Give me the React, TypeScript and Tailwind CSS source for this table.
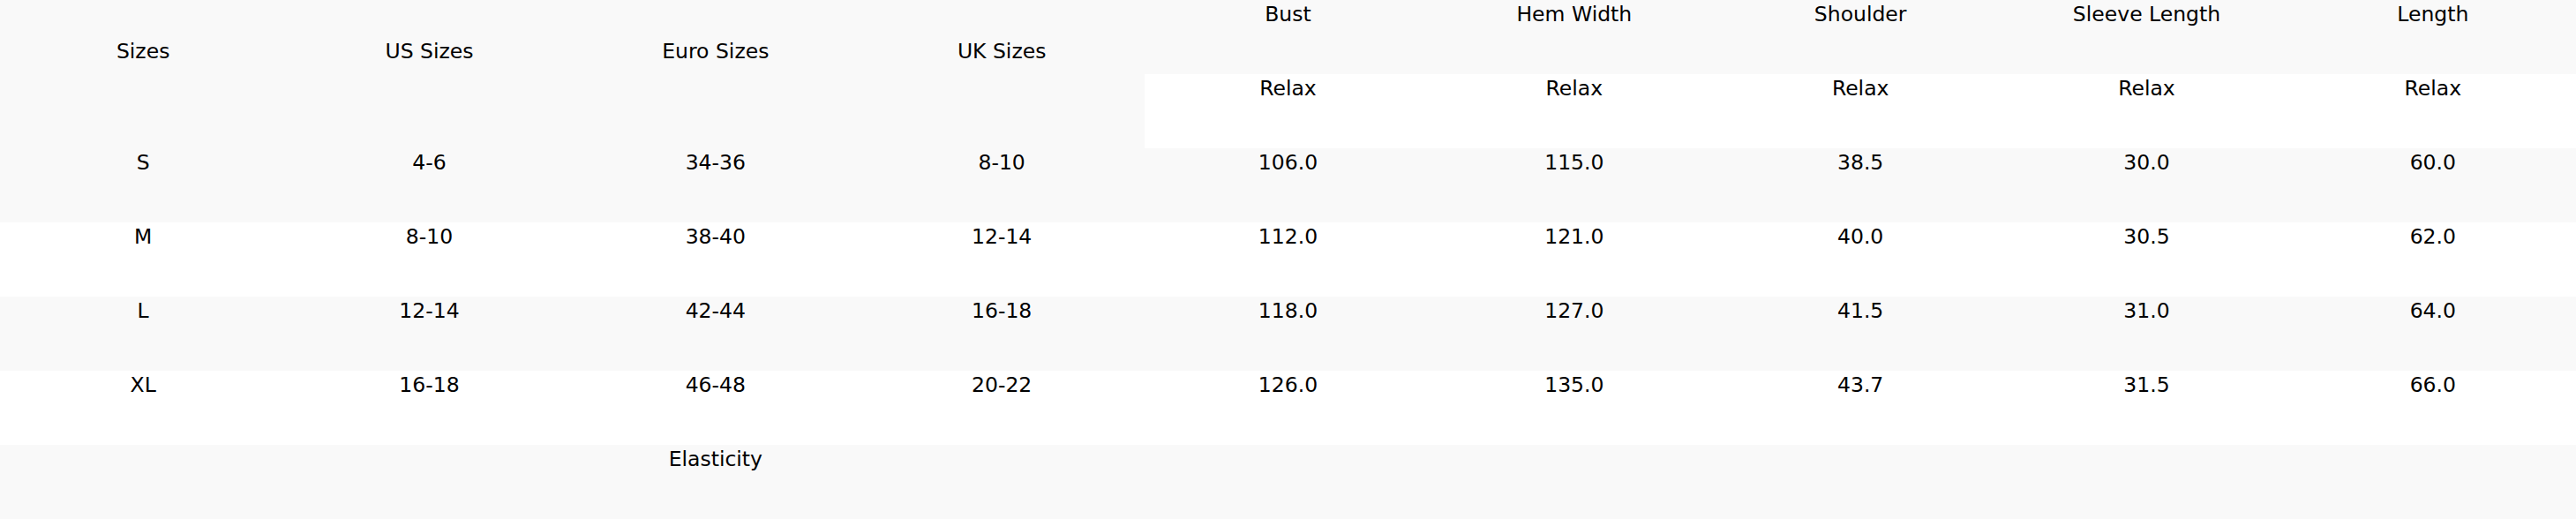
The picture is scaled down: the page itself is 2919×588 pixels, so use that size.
import React from 'react';

const sizes = [
  { size: 'S', us: '4-6', euro: '34-36', uk: '8-10', bust: '106.0', hem: '115.0', shoulder: '38.5', sleeve: '30.0', length: '60.0' },
  { size: 'M', us: '8-10', euro: '38-40', uk: '12-14', bust: '112.0', hem: '121.0', shoulder: '40.0', sleeve: '30.5', length: '62.0' },
  { size: 'L', us: '12-14', euro: '42-44', uk: '16-18', bust: '118.0', hem: '127.0', shoulder: '41.5', sleeve: '31.0', length: '64.0' },
  { size: 'XL', us: '16-18', euro: '46-48', uk: '20-22', bust: '126.0', hem: '135.0', shoulder: '43.7', sleeve: '31.5', length: '66.0' },
];

const measures = ['Bust', 'Hem Width', 'Shoulder', 'Sleeve Length', 'Length'];

const Cell: React.FC<{ children?: React.ReactNode; className?: string }> = ({ children, className = '' }) => (
  <div className={`h-[84px] text-center leading-[32px] ${className}`}>{children}</div>
);

export default function App() {
  return (
    <div
      className="w-full grid grid-cols-9 grid-rows-[repeat(7,84px)] text-[23.5px] text-black"
      style={{ fontFamily: '"DejaVu Sans", sans-serif' }}
    >
      {/* header, first four columns span two rows */}
      {['Sizes', 'US Sizes', 'Euro Sizes', 'UK Sizes'].map((h) => (
        <div key={h} className="row-span-2 bg-[#f9f9f9] flex flex-col justify-center">
          <Cell>{h}</Cell>
        </div>
      ))}
      {measures.map((m) => (
        <Cell key={m} className="bg-[#f9f9f9]">{m}</Cell>
      ))}
      {measures.map((m) => (
        <Cell key={m + '-relax'} className="bg-white">Relax</Cell>
      ))}

      {sizes.map((r, i) => {
        const bg = i % 2 === 0 ? 'bg-[#f9f9f9]' : 'bg-white';
        return (
          <React.Fragment key={r.size}>
            <Cell className={bg}>{r.size}</Cell>
            <Cell className={bg}>{r.us}</Cell>
            <Cell className={bg}>{r.euro}</Cell>
            <Cell className={bg}>{r.uk}</Cell>
            <Cell className={bg}>{r.bust}</Cell>
            <Cell className={bg}>{r.hem}</Cell>
            <Cell className={bg}>{r.shoulder}</Cell>
            <Cell className={bg}>{r.sleeve}</Cell>
            <Cell className={bg}>{r.length}</Cell>
          </React.Fragment>
        );
      })}

      <Cell className="col-span-5 bg-[#f9f9f9]">Elasticity</Cell>
      <Cell className="col-span-4 bg-[#f9f9f9]" />
    </div>
  );
}
